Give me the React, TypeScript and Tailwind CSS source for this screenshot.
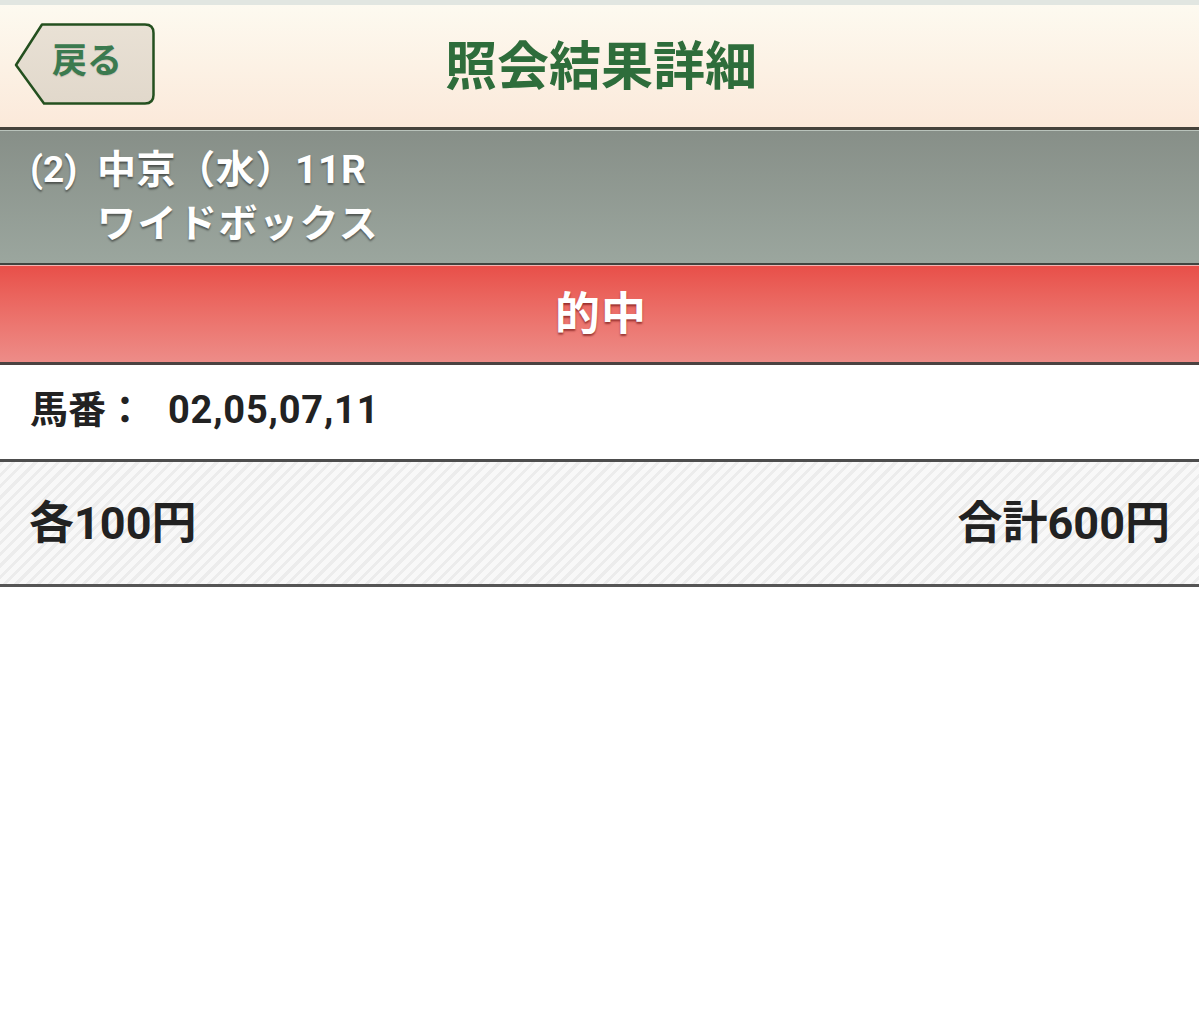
import React from "react";

const font = { fontFamily: 'Roboto, "Noto Sans CJK JP", sans-serif' };

const BackButton: React.FC = () => (
  <button className="relative w-[141px] h-[82px] cursor-pointer">
    <svg
      className="absolute inset-0"
      width="141"
      height="82"
      viewBox="0 0 141 82"
    >
      <defs>
        <linearGradient id="bk" x1="0" y1="0" x2="0" y2="1">
          <stop offset="0" stopColor="#e9e1d5" />
          <stop offset="1" stopColor="#e1d8cb" />
        </linearGradient>
      </defs>
      <path
        d="M28 1.5 L131 1.5 Q139.5 1.5 139.5 10 L139.5 72 Q139.5 80.5 131 80.5 L30 80.5 L2 42 Z"
        fill="url(#bk)"
        stroke="#24501f"
        strokeWidth="2.5"
        strokeLinejoin="round"
      />
    </svg>
    <span className="absolute left-[38px] top-[21px] text-[35px] leading-none font-bold text-[#3b7a4f] [text-shadow:0_1px_1px_rgba(0,0,0,0.15)]">
      戻る
    </span>
  </button>
);

const App: React.FC = () => {
  return (
    <div className="w-[1199px] min-h-[1020px] bg-white" style={font}>
      <div className="h-[5px] bg-[#e1e6e1]" />

      {/* ヘッダー */}
      <div className="h-[125px] grid grid-cols-[1fr_auto_1fr] items-center px-[14px] bg-gradient-to-b from-[#fdfaf0] to-[#fbe9da] border-b-[3px] border-[#45423b]">
        <div className="pt-[2px]">
          <BackButton />
        </div>
        <h1 className="text-[52px] font-bold text-[#2e6d3b] leading-none pt-[4px] pl-[3px]">
          照会結果詳細
        </h1>
        <div />
      </div>

      {/* レース情報 */}
      <div className="h-[135px] border-t border-[#b9c3bb] bg-gradient-to-b from-[#878f88] to-[#9ba69e] border-b-[2px] border-b-[#3f4440] flex pl-[30px] pt-[12px] text-white font-bold [text-shadow:0_2px_2px_rgba(0,0,0,0.45)]">
        <div className="text-[37px] leading-[54px] w-[67px]">(2)</div>
        <div className="text-[39px] leading-[54px] tracking-[0.6px]">
          <div>中京（水）11R</div>
          <div className="tracking-[1.5px]">ワイドボックス</div>
        </div>
      </div>

      {/* 的中 */}
      <div className="h-[100px] border-t border-[#f3b4b1] bg-gradient-to-b from-[#e84f49] to-[#ed8c88] border-b-[3px] border-b-[#4a4241] flex items-center justify-center">
        <span className="text-[45px] font-bold text-white leading-none tracking-[1px] pl-[3px] [text-shadow:0_2px_2px_rgba(90,0,0,0.55)]">
          的中
        </span>
      </div>

      {/* 馬番 */}
      <div className="h-[97px] border-b-[3px] border-[#4d4d4d] flex items-center pl-[30px] pb-[4px] text-[#222] font-bold">
        <span className="text-[38px] leading-none">馬番：</span>
        <span className="text-[38px] leading-none ml-[24px] tracking-[0.8px]">
          02,05,07,11
        </span>
      </div>

      {/* 金額 */}
      <div className="h-[125px] border-b-[3px] border-[#555] bg-[repeating-linear-gradient(135deg,#ececec_0px,#ececec_3px,#f8f8f8_3px,#f8f8f8_8px)] flex items-center justify-between pl-[29px] pr-[29px] text-[#222] font-bold">
        <span className="text-[45px] leading-none">各100円</span>
        <span className="text-[45px] leading-none">合計600円</span>
      </div>
    </div>
  );
};

export default App;
